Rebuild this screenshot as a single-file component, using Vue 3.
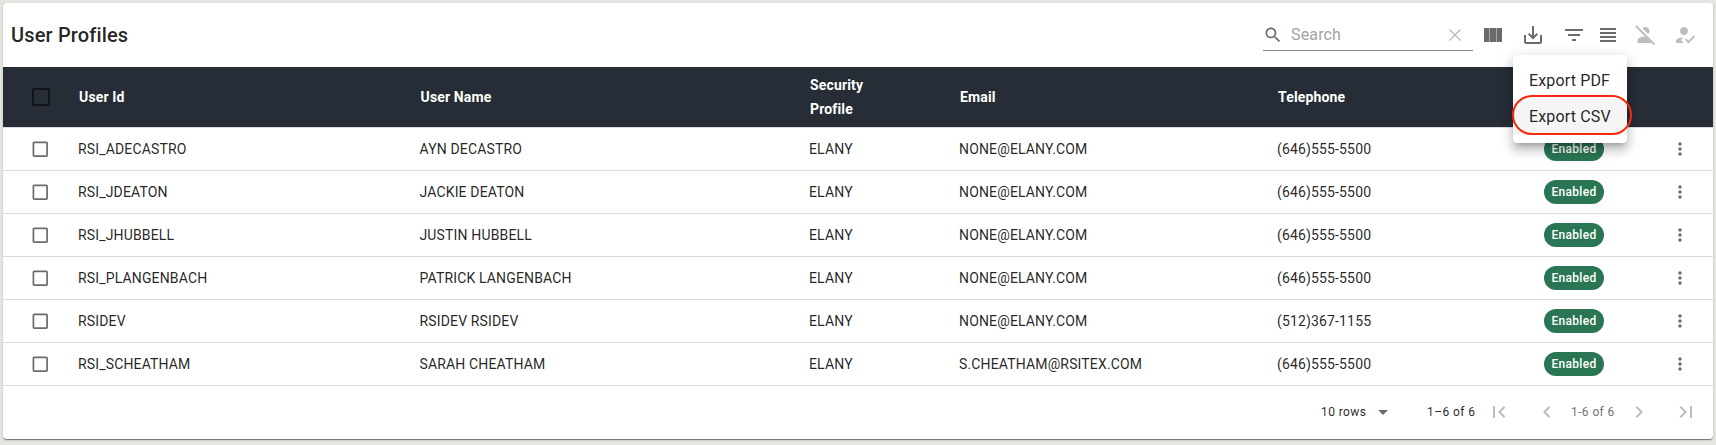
<script setup>
const columns = ['User Id', 'User Name', 'Security Profile', 'Email', 'Telephone']

const rows = [
  ['RSI_ADECASTRO', 'AYN DECASTRO', 'ELANY', 'NONE@ELANY.COM', '(646)555-5500'],
  ['RSI_JDEATON', 'JACKIE DEATON', 'ELANY', 'NONE@ELANY.COM', '(646)555-5500'],
  ['RSI_JHUBBELL', 'JUSTIN HUBBELL', 'ELANY', 'NONE@ELANY.COM', '(646)555-5500'],
  ['RSI_PLANGENBACH', 'PATRICK LANGENBACH', 'ELANY', 'NONE@ELANY.COM', '(646)555-5500'],
  ['RSIDEV', 'RSIDEV RSIDEV', 'ELANY', 'NONE@ELANY.COM', '(512)367-1155'],
  ['RSI_SCHEATHAM', 'SARAH CHEATHAM', 'ELANY', 'S.CHEATHAM@RSITEX.COM', '(646)555-5500'],
]

const box = 'M19 5v14H5V5h14m0-2H5c-1.1 0-2 .9-2 2v14c0 1.1.9 2 2 2h14c1.1 0 2-.9 2-2V5c0-1.1-.9-2-2-2z'
const dots = 'M12 8c1.1 0 2-.9 2-2s-.9-2-2-2-2 .9-2 2 .9 2 2 2zm0 2c-1.1 0-2 .9-2 2s.9 2 2 2 2-.9 2-2-.9-2-2-2zm0 6c-1.1 0-2 .9-2 2s.9 2 2 2 2-.9 2-2-.9-2-2-2z'
</script>

<template>
  <main class="page">
    <section class="card">
      <header class="toolbar">
        <h1 class="title">User Profiles</h1>
        <div class="search">
          <svg class="icon search-icon" viewBox="0 0 24 24"><path d="M15.5 14h-.79l-.28-.27C15.41 12.59 16 11.11 16 9.5 16 5.91 13.09 3 9.5 3S3 5.91 3 9.5 5.91 16 9.5 16c1.61 0 3.09-.59 4.23-1.57l.27.28v.79l5 4.99L20.49 19l-4.99-5zm-6 0C7.01 14 5 11.99 5 9.5S7.01 5 9.5 5 14 7.01 14 9.5 11.99 14 9.5 14z" /></svg>
          <span class="placeholder">Search</span>
          <svg class="clear" viewBox="0 0 12 12"><path d="M.5.5l11 11M11.5.5l-11 11" /></svg>
        </div>
        <nav class="actions">
          <svg class="icon view-columns" viewBox="0 0 24 24"><path class="gap" d="M3 5h18v14H3z" /><path d="M3 5h5v14H3zM9 5h6v14H9zM16 5h5v14h-5z" /></svg>
          <div class="export">
            <svg class="icon" viewBox="0 0 24 24"><path d="M19 12v7H5v-7H3v7c0 1.1.9 2 2 2h14c1.1 0 2-.9 2-2v-7h-2zm-6 .67l2.59-2.58L17 11.5l-5 5-5-5 1.41-1.41L11 12.67V3h2z" /></svg>
            <ul class="menu">
              <li>Export PDF</li>
              <li class="active">Export CSV<span class="ring"></span></li>
            </ul>
          </div>
          <svg class="icon filter" viewBox="0 0 24 24"><path d="M10 18h4v-2h-4v2zM3 6v2h18V6H3zm3 7h12v-2H6v2z" /></svg>
          <svg class="icon density" viewBox="0 0 24 24"><path d="M4 15h16v-2H4v2zm0 4h16v-2H4v2zm0-8h16V9H4v2zm0-6v2h16V5H4z" /></svg>
          <svg class="icon off person-off" viewBox="0 0 24 24">
            <path d="M12.500 12c2.210 0 4-1.790 4-4s-1.790-4-4-4-4 1.790-4 4 1.790 4 4 4zm-.5 1.500c-2.670 0-7.500 1.340-7.500 4V20h15.500v-2.500c0-2.660-5.330-4-8-4z" />
            <path class="cut" d="M4.500 2l18 18" />
            <path class="slash" d="M2.700 2.800l18.800 18.800" />
          </svg>
          <svg class="icon off person-check" viewBox="0 0 24 24"><path d="M11 12c2.210 0 4-1.790 4-4s-1.790-4-4-4-4 1.790-4 4 1.790 4 4 4zm0 8l-3-3 2.490-2.490C7.430 14.160 3 15.730 3 18v2h8zm9.600-7.500l-5.130 5.170-2.070-2.080L12 17l3.470 3.500L22 13.910z" /></svg>
        </nav>
      </header>

      <div class="grid head">
        <svg class="icon head-box" viewBox="0 0 24 24"><path :d="box" /></svg>
        <span v-for="c in columns" :key="c" :class="{ narrow: c.startsWith('Security') }">{{ c }}</span>
      </div>

      <div v-for="r in rows" :key="r[0]" class="grid row">
        <svg class="icon row-box" viewBox="0 0 24 24"><path :d="box" /></svg>
        <span v-for="(cell, i) in r" :key="i">{{ cell }}</span>
        <b class="badge">Enabled</b>
        <svg class="icon more" viewBox="0 0 24 24"><path :d="dots" /></svg>
      </div>

      <footer class="footer">
        <span class="page-size">10 rows</span>
        <svg class="icon caret" viewBox="0 0 24 24"><path d="M7 10l5 5 5-5z" /></svg>
        <span class="range">1–6 of 6</span>
        <svg class="icon off first" viewBox="0 0 24 24"><path d="M18.410 16.590L13.820 12l4.590-4.590L17 6l-6 6 6 6zM6 6h2v12H6z" /></svg>
        <svg class="icon off prev" viewBox="0 0 24 24"><path d="M15.410 7.410L14 6l-6 6 6 6 1.410-1.410L10.830 12z" /></svg>
        <span class="status">1-6 of 6</span>
        <svg class="icon off next" viewBox="0 0 24 24"><path d="M10 6L8.590 7.410 13.170 12l-4.580 4.590L10 18l6-6z" /></svg>
        <svg class="icon off last" viewBox="0 0 24 24"><path d="M5.590 7.410L10.180 12l-4.590 4.590L7 18l6-6-6-6zM16 6h2v12h-2z" /></svg>
      </footer>
    </section>
  </main>
</template>

<style>
body {
  background: #e5e6df;
}
</style>

<style scoped>
.page {
  box-sizing: border-box;
  height: 445px;
  padding: 3px 3px 6px;
  font-family: Roboto, 'Liberation Sans', sans-serif;
  color: rgba(0, 0, 0, 0.87);
}
.card {
  height: 436px;
  background: #fff;
  border-radius: 4px;
  box-shadow: 0 2px 1px -1px rgba(0, 0, 0, 0.3), 0 1px 1px rgba(0, 0, 0, 0.22), 0 1px 3px rgba(0, 0, 0, 0.12);
}
.icon {
  flex: none;
  width: 24px;
  height: 24px;
  fill: #6b6b6b;
}
.icon.off {
  fill: #bdbdbd;
}
.toolbar {
  display: flex;
  height: 64px;
  padding-left: 8px;
}
.title {
  flex: 1;
  margin: 0;
  font-size: 20px;
  font-weight: 500;
  letter-spacing: 0.15px;
  line-height: 64px;
}
.search {
  display: flex;
  align-items: center;
  box-sizing: border-box;
  width: 210px;
  height: 32px;
  margin-top: 16px;
  border-bottom: 1px solid #8a8a8a;
}
.search-icon {
  width: 20px;
  height: 20px;
}
.placeholder {
  flex: 1;
  margin-left: 8px;
  font-size: 16px;
  letter-spacing: 0.15px;
  color: #a3a3a3;
}
.clear {
  width: 12px;
  height: 12px;
  margin-right: 12px;
  stroke: #b5b5b5;
  stroke-width: 1.2;
}
.actions {
  display: flex;
  align-items: center;
  width: 240px;
}
.view-columns {
  margin-left: 8px;
}
.gap {
  fill: #a8a8a8;
}
.export {
  position: relative;
  height: 24px;
  margin-left: 16px;
}
.filter {
  margin-left: 17px;
}
.density {
  margin-left: 10px;
}
.person-off {
  margin-left: 13px;
}
.cut {
  fill: none;
  stroke: #fff;
  stroke-width: 2.4;
}
.slash {
  fill: none;
  stroke: #bdbdbd;
  stroke-width: 2;
}
.person-check {
  margin-left: 16px;
}
.menu {
  position: absolute;
  z-index: 2;
  top: 32px;
  left: -8px;
  box-sizing: border-box;
  width: 114px;
  height: 88px;
  margin: 0;
  padding: 8px 0;
  list-style: none;
  background: #fff;
  border-radius: 4px;
  box-shadow: 0 5px 5px -3px rgba(0, 0, 0, 0.2), 0 8px 10px 1px rgba(0, 0, 0, 0.14), 0 3px 14px 2px rgba(0, 0, 0, 0.12);
}
.menu li {
  position: relative;
  padding-left: 16px;
  font-size: 16px;
  letter-spacing: 0.15px;
  line-height: 36px;
  white-space: nowrap;
}
.menu .active {
  background: #f5f5f5;
}
.ring {
  position: absolute;
  top: -4px;
  left: -1px;
  box-sizing: border-box;
  width: 120px;
  height: 40px;
  border: 2px solid #f9280c;
  border-radius: 20px;
}
.grid {
  display: grid;
  grid-template-columns: 75px 341.5px 389.5px 150px 318px 267px 60px 1fr;
  align-items: center;
  font-size: 14px;
  letter-spacing: 0.15px;
}
.head {
  height: 60px;
  border-bottom: 1px solid #dcdcdc;
  background: #262d36;
  background-clip: padding-box;
  color: #fff;
  font-weight: 700;
  line-height: 24px;
}
.head span {
  padding-left: 1px;
}
.head .narrow {
  width: 70px;
}
.head-box {
  margin-left: 26px;
  fill: #101317;
}
.row {
  height: 42px;
  border-bottom: 1px solid #dcdcdc;
}
.row-box {
  width: 20.500px;
  height: 20.500px;
  margin-left: 27px;
}
.badge {
  width: 60px;
  height: 24px;
  border-radius: 12px;
  background: #2a7654;
  color: #fff;
  font-size: 12px;
  font-weight: 500;
  letter-spacing: 0.3px;
  line-height: 24px;
  text-align: center;
}
.more {
  width: 20px;
  height: 20px;
  margin-left: 66px;
}
.footer {
  display: flex;
  align-items: center;
  height: 52px;
  font-size: 12px;
  letter-spacing: 0.4px;
}
.page-size {
  margin-left: 1318px;
  width: 50px;
}
.range {
  width: 60px;
  margin-left: 32px;
}
.prev {
  margin-left: 24px;
}
.status {
  width: 55px;
  margin-left: 12px;
  color: #757575;
}
.next {
  margin-left: 1px;
}
.last {
  margin-left: 23px;
}
</style>
